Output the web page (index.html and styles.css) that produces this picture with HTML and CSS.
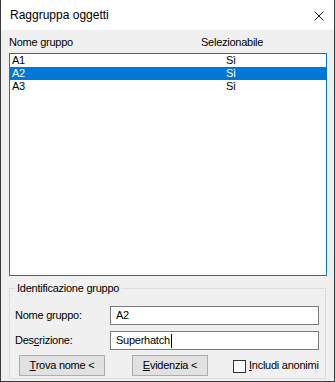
FILE: index.html
```html
<!DOCTYPE html>
<html lang="it">
<head>
<meta charset="utf-8">
<title>Raggruppa oggetti</title>
<link rel="stylesheet" href="styles.css">
</head>
<body>
<div class="window">
  <div class="titlebar">
    <span class="title">Raggruppa oggetti</span>
    <svg class="close" width="10" height="10" viewBox="0 0 10 10" aria-hidden="true">
      <path d="M0.5 0.5 L9.5 9.5 M9.5 0.5 L0.5 9.5" stroke="#1a1a1a" stroke-width="1" fill="none"/>
    </svg>
  </div>
  <div class="content">
    <div class="list-head">
      <span class="h1">Nome <u>g</u>ruppo</span>
      <span class="h2">Selezionabile</span>
    </div>
    <div class="list">
      <div class="row"><span class="c1">A1</span><span class="c2">Sì</span></div>
      <div class="row sel"><span class="c1">A2</span><span class="c2">Sì</span></div>
      <div class="row"><span class="c1">A3</span><span class="c2">Sì</span></div>
    </div>
    <div class="group">
      <div class="legend">Identificazione gruppo</div>
      <div class="form">
        <span class="lbl">Nome <u>g</u>ruppo:</span>
        <div class="input">A2</div>
        <span class="lbl">Des<u>c</u>rizione:</span>
        <div class="input">Superhatch<span class="caret"></span></div>
      </div>
      <div class="actions">
        <div class="btn btn-find"><u>T</u>rova nome &lt;</div>
        <div class="btn btn-hl"><u>E</u>videnzia &lt;</div>
        <div class="check"><span class="box"></span><span class="check-lbl"><u>I</u>ncludi anonimi</span></div>
      </div>
    </div>
  </div>
</div>
</body>
</html>
```
FILE: styles.css
```css
* { box-sizing: border-box; }
html, body { margin: 0; padding: 0; }
body {
  font-family: "Liberation Sans", Arial, sans-serif;
  font-size: 11px;
  letter-spacing: -0.25px;
  color: #000;
  background: #f0f0f0;
}
u { text-decoration: underline; text-underline-offset: 1px; }

.window {
  width: 335px;
  height: 382px;
  border-left: 1px solid #3a3a3a;
  border-right: 1px solid #3a3a3a;
  border-bottom: 1px solid #3a3a3a;
  background: #f0f0f0;
  display: flex;
  flex-direction: column;
}

.titlebar {
  height: 30px;
  background: #fff;
  display: flex;
  align-items: center;
  justify-content: space-between;
  padding: 0 10px 0 9px;
}
.title {
  font-size: 12px;
  letter-spacing: 0;
  line-height: 30px;
}
.close { display: block; margin-top: 2px; }

.content {
  padding: 0 7px 2px 8px;
}

.list-head {
  display: flex;
  height: 23px;
  padding-top: 6px;
  line-height: 13px;
}
.h1 { width: 192px; }

.list {
  height: 223px;
  background: #fff;
  border: 1px solid #0078d7;
}
.row {
  display: flex;
  height: 13px;
  line-height: 13px;
  padding-left: 2px;
}
.row .c1 { width: 214px; }
.row.sel { background: #0078d7; color: #fff; }

.group {
  margin-top: 12px;
  margin-right: 1px;
  height: 91px;
  border: 1px solid #dcdcdc;
  padding: 0 6px 0 5px;
}
.legend {
  margin-top: -7px;
  height: 13px;
  line-height: 13px;
  width: fit-content;
  padding: 0 2px;
  background: #f0f0f0;
}

.form {
  margin-top: 11px;
  display: grid;
  grid-template-columns: 95px 209px;
  row-gap: 6px;
}
.lbl { line-height: 19px; height: 19px; }
.input {
  height: 19px;
  line-height: 17px;
  border: 1px solid #7a7a7a;
  background: #fff;
  padding: 0 4px 0 5px;
  display: flex;
  align-items: center;
}
.caret {
  display: inline-block;
  width: 1px;
  height: 14px;
  background: #000;
  margin-left: 1px;
}

.actions {
  margin-top: 5px;
  display: flex;
  align-items: center;
  height: 21px;
}
.btn {
  height: 21px;
  line-height: 18px;
  text-align: center;
  background: #e1e1e1;
  border: 1px solid #adadad;
}
.btn-find { width: 86px; margin-left: 4px; }
.btn-hl { width: 76px; margin-left: 27px; }
.check {
  display: flex;
  align-items: center;
  margin-left: 25px;
}
.box {
  width: 13px;
  height: 13px;
  border: 1px solid #333;
  background: #fff;
  margin-top: 2px;
}
.check-lbl { margin-left: 3px; line-height: 19px; }
```
